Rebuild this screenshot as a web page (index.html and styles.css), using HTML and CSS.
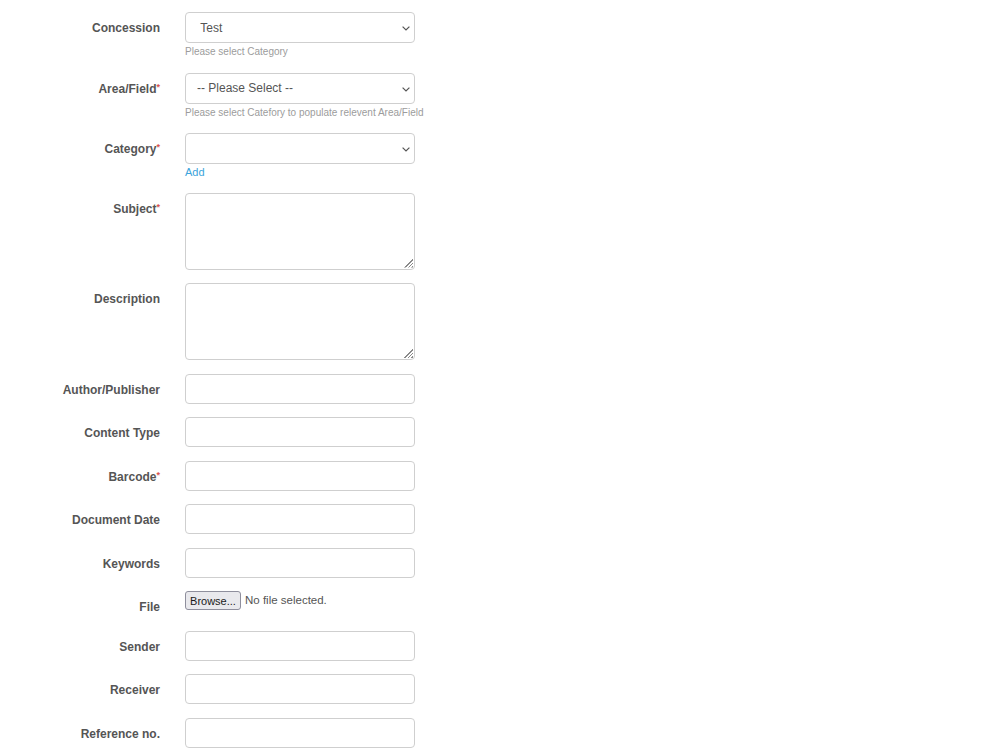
FILE: index.html
```html
<!DOCTYPE html>
<html>
<head>
<meta charset="utf-8">
<title>Document form</title>
<link rel="stylesheet" href="styles.css">
</head>
<body>
<form class="form">
  <div class="row">
    <label class="label">Concession</label>
    <div class="field">
      <div class="select-wrap">
        <select class="control select"><option>&nbsp;Test</option></select>
        <svg class="chevron" width="8" height="5" viewBox="0 0 8 5"><path d="M0.6 0.6 L4 4 L7.4 0.6" fill="none" stroke="#555" stroke-width="1.2"/></svg>
      </div>
      <div class="help">Please select Category</div>
    </div>
  </div>
  <div class="row">
    <label class="label">Area/Field<span class="req">*</span></label>
    <div class="field">
      <div class="select-wrap">
        <select class="control select"><option>-- Please Select --</option></select>
        <svg class="chevron" width="8" height="5" viewBox="0 0 8 5"><path d="M0.6 0.6 L4 4 L7.4 0.6" fill="none" stroke="#555" stroke-width="1.2"/></svg>
      </div>
      <div class="help">Please select Catefory to populate relevent Area/Field</div>
    </div>
  </div>
  <div class="row">
    <label class="label">Category<span class="req">*</span></label>
    <div class="field">
      <div class="select-wrap">
        <select class="control select"><option></option></select>
        <svg class="chevron" width="8" height="5" viewBox="0 0 8 5"><path d="M0.6 0.6 L4 4 L7.4 0.6" fill="none" stroke="#555" stroke-width="1.2"/></svg>
      </div>
      <a class="add" href="#">Add</a>
    </div>
  </div>
  <div class="row">
    <label class="label">Subject<span class="req">*</span></label>
    <div class="field">
      <div class="area-wrap">
        <textarea class="control area"></textarea>
        <span class="grip"></span>
      </div>
    </div>
  </div>
  <div class="row">
    <label class="label">Description</label>
    <div class="field">
      <div class="area-wrap">
        <textarea class="control area"></textarea>
        <span class="grip"></span>
      </div>
    </div>
  </div>
  <div class="row">
    <label class="label">Author/Publisher</label>
    <div class="field"><input class="control" type="text"></div>
  </div>
  <div class="row">
    <label class="label">Content Type</label>
    <div class="field"><input class="control" type="text"></div>
  </div>
  <div class="row">
    <label class="label">Barcode<span class="req">*</span></label>
    <div class="field"><input class="control" type="text"></div>
  </div>
  <div class="row">
    <label class="label">Document Date</label>
    <div class="field"><input class="control" type="text"></div>
  </div>
  <div class="row">
    <label class="label">Keywords</label>
    <div class="field"><input class="control" type="text"></div>
  </div>
  <div class="row">
    <label class="label">File</label>
    <div class="field file-field">
      <button class="browse" type="button">Browse...</button>
      <span class="file-text">No file selected.</span>
    </div>
  </div>
  <div class="row">
    <label class="label">Sender</label>
    <div class="field"><input class="control" type="text"></div>
  </div>
  <div class="row">
    <label class="label">Receiver</label>
    <div class="field"><input class="control" type="text"></div>
  </div>
  <div class="row">
    <label class="label">Reference no.</label>
    <div class="field"><input class="control" type="text"></div>
  </div>
</form>
</body>
</html>
```

FILE: styles.css
```css
html, body {
  margin: 0;
  padding: 0;
  background: #ffffff;
}

body {
  font-family: "Liberation Sans", Arial, sans-serif;
  color: #555555;
  overflow: hidden;
}

.form {
  padding-top: 12px;
}

.row {
  display: grid;
  grid-template-columns: 160px 230px;
  column-gap: 25px;
  align-items: start;
  margin-bottom: 13.5px;
}

.label {
  text-align: right;
  padding-top: 7px;
  font-size: 12px;
  line-height: 18px;
  font-weight: bold;
  color: #555555;
}

.req {
  color: #d9534f;
  font-size: 9px;
  vertical-align: 3px;
  line-height: 0;
}

.field {
  display: flex;
  flex-direction: column;
  width: 230px;
}

.control {
  box-sizing: border-box;
  width: 230px;
  height: 30px;
  margin: 0;
  border: 1px solid #cfcfcf;
  border-radius: 4px;
  background: #ffffff;
  font-family: "Liberation Sans", Arial, sans-serif;
  font-size: 12px;
  color: #555555;
  padding: 0 10px;
  outline: none;
}

.select-wrap {
  position: relative;
  width: 230px;
}

.select {
  -webkit-appearance: none;
  appearance: none;
  height: 31px;
  padding: 0 11px;
}

.chevron {
  position: absolute;
  right: 5px;
  top: 14px;
  pointer-events: none;
}

.help {
  margin-top: 2px;
  font-size: 10px;
  line-height: 14px;
  color: #9c9c9c;
  white-space: nowrap;
}

.add {
  margin-top: 1px;
  font-size: 11px;
  line-height: 14px;
  color: #3aa3db;
  text-decoration: none;
  align-self: flex-start;
}

.area-wrap {
  position: relative;
  width: 230px;
  height: 77px;
}

.area {
  height: 77px;
  resize: none;
  display: block;
  padding: 6px 10px;
}

.grip {
  position: absolute;
  right: 2px;
  bottom: 2px;
  width: 10px;
  height: 10px;
  background: repeating-linear-gradient(135deg, #8a8a8a 0, #8a8a8a 1px, transparent 1px, transparent 2.5px);
  clip-path: polygon(100% 0, 100% 100%, 0 100%);
  pointer-events: none;
}

.file-field {
  flex-direction: row;
  align-items: flex-start;
  min-height: 26px;
}

.browse {
  box-sizing: border-box;
  height: 19px;
  width: 56px;
  padding: 0;
  margin: 0;
  border: 1px solid #8f8f9d;
  border-radius: 3px;
  background: #e9e9ed;
  font-family: "Liberation Sans", Arial, sans-serif;
  font-size: 11px;
  color: #1a1a1a;
}

.file-text {
  margin-left: 4px;
  font-size: 11.5px;
  line-height: 19px;
  color: #555555;
}
```
